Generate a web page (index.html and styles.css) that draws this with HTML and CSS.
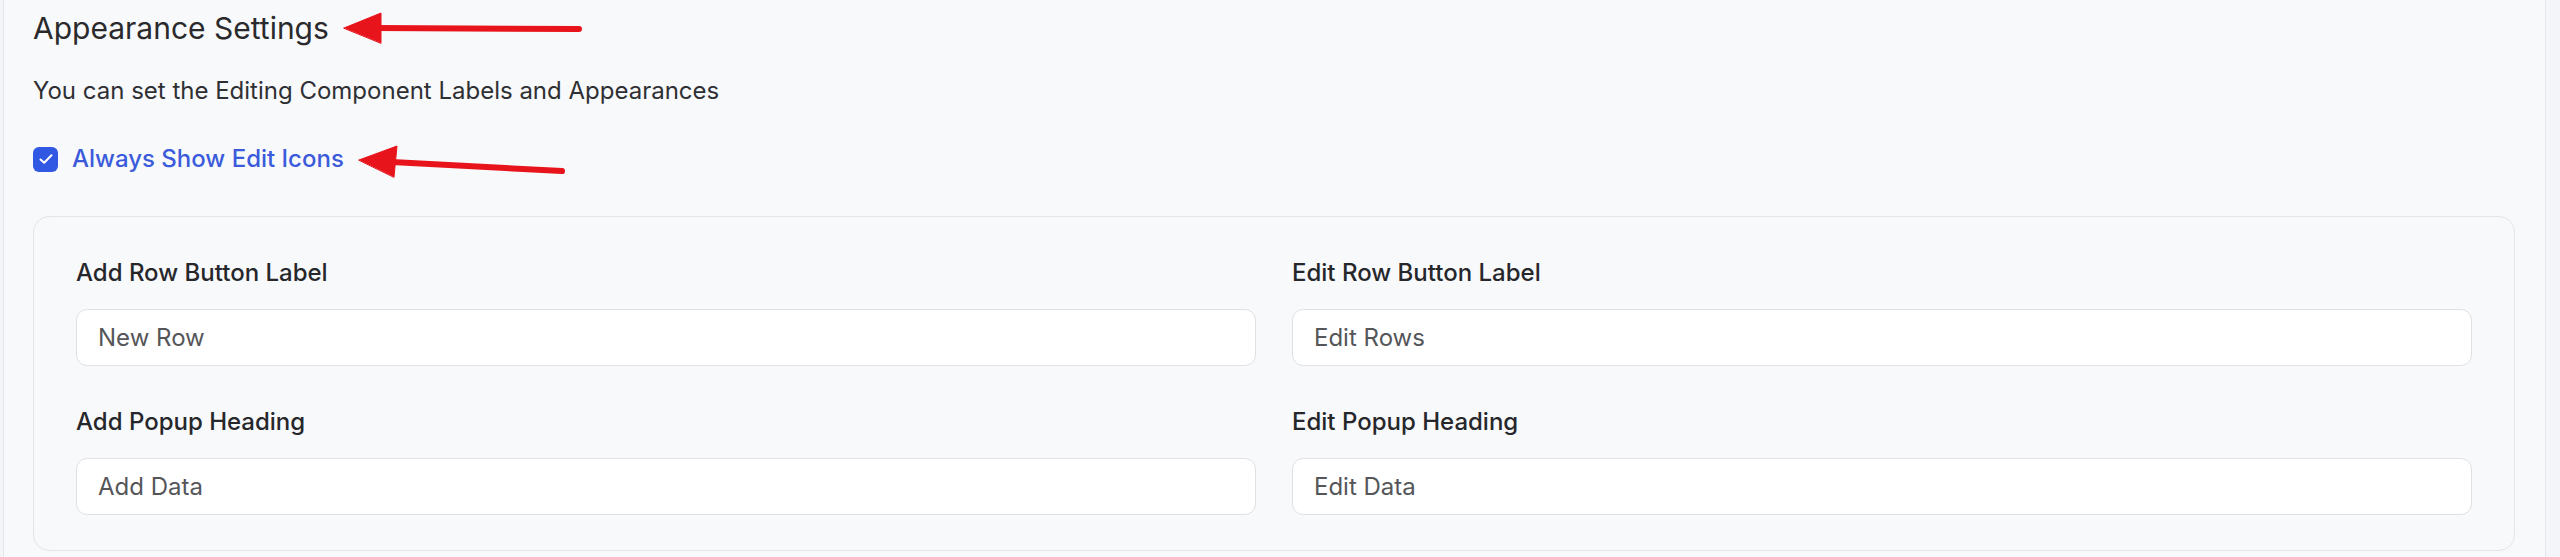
FILE: index.html
```html
<!DOCTYPE html>
<html lang="en">
<head>
  <meta charset="UTF-8" />
  <meta name="viewport" content="width=device-width, initial-scale=1.0" />
  <title>Appearance Settings</title>
  <link rel="stylesheet" href="styles.css">
</head>
<body>
  <div class="panel">
    <h2 class="title">Appearance Settings</h2>
    <p class="desc">You can set the Editing Component Labels and Appearances</p>

    <label class="check">
      <span class="box">
        <svg width="18" height="18" viewBox="0 0 18 18"><path d="M3.5 9.5l3.7 3.3L14.5 5.3" fill="none" stroke="#fff" stroke-width="2" stroke-linecap="round" stroke-linejoin="round"/></svg>
      </span>
      Always Show Edit Icons
    </label>

    <div class="card">
      <div class="field">
        <span class="label">Add Row Button Label</span>
        <input class="input" type="text" value="New Row" />
      </div>
      <div class="field">
        <span class="label">Edit Row Button Label</span>
        <input class="input" type="text" value="Edit Rows" />
      </div>
      <div class="field">
        <span class="label">Add Popup Heading</span>
        <input class="input" type="text" value="Add Data" />
      </div>
      <div class="field">
        <span class="label">Edit Popup Heading</span>
        <input class="input" type="text" value="Edit Data" />
      </div>
    </div>

    <!-- annotation arrows -->
    <svg class="arrows" width="600" height="200" viewBox="0 0 600 200">
      <g fill="#e8141b" stroke="#e8141b" stroke-linecap="round">
        <line x1="372" y1="28" x2="575" y2="29" stroke-width="6" />
        <polygon points="340,28 377,13 377,43" stroke-width="1" stroke-linejoin="round" />
        <line x1="388" y1="162" x2="558" y2="171" stroke-width="6" />
        <polygon points="355,160 393,146 390,177" stroke-width="1" stroke-linejoin="round" />
      </g>
    </svg>
  </div>
</body>
</html>
```

FILE: styles.css
```css
body {
  margin: 0;
  background: #f4f5f8;
  font-family: Inter, "Noto Sans", Arial, sans-serif;
  color: #2b2d31;
}
.panel {
  position: relative;
  height: 557px;
  box-sizing: border-box;
  margin: 0 14px 0 3px;
  padding: 10px 30px 0 29px;
  background: #f8f9fb;
  border-left: 1px solid #e4e6eb;
  border-right: 1px solid #e4e6eb;
}
.title {
  margin: 0;
  font-size: 30px;
  font-weight: 400;
  line-height: 36px;
  color: #2a2a2d;
}
.desc {
  margin: 30px 0 0;
  font-size: 24px;
  line-height: 30px;
  color: #2f3034;
}
.check {
  display: flex;
  align-items: center;
  gap: 14px;
  margin-top: 38px;
  font-size: 24px;
  line-height: 30px;
  font-weight: 500;
  color: #3b5bdb;
}
.box {
  display: flex;
  align-items: center;
  justify-content: center;
  width: 25px;
  height: 25px;
  border-radius: 6px;
  background: #3158e3;
}
.card {
  margin-top: 42px;
  padding: 41px 42px 35px;
  border: 1px solid #e3e5e9;
  border-radius: 16px;
  background: #f8f9fb;
  display: grid;
  grid-template-columns: 1fr 1fr;
  column-gap: 36px;
  row-gap: 41px;
}
.field {
  display: flex;
  flex-direction: column;
  gap: 21px;
}
.label {
  font-size: 24px;
  line-height: 30px;
  font-weight: 500;
  color: #26272b;
}
.input {
  box-sizing: border-box;
  height: 57px;
  padding: 0 21px;
  border: 1px solid #dfe1e5;
  border-radius: 11px;
  background: #fff;
  font-family: inherit;
  font-size: 24px;
  color: #555659;
  outline: none;
}
.arrows {
  position: absolute;
  left: 0;
  top: 0;
}
```
